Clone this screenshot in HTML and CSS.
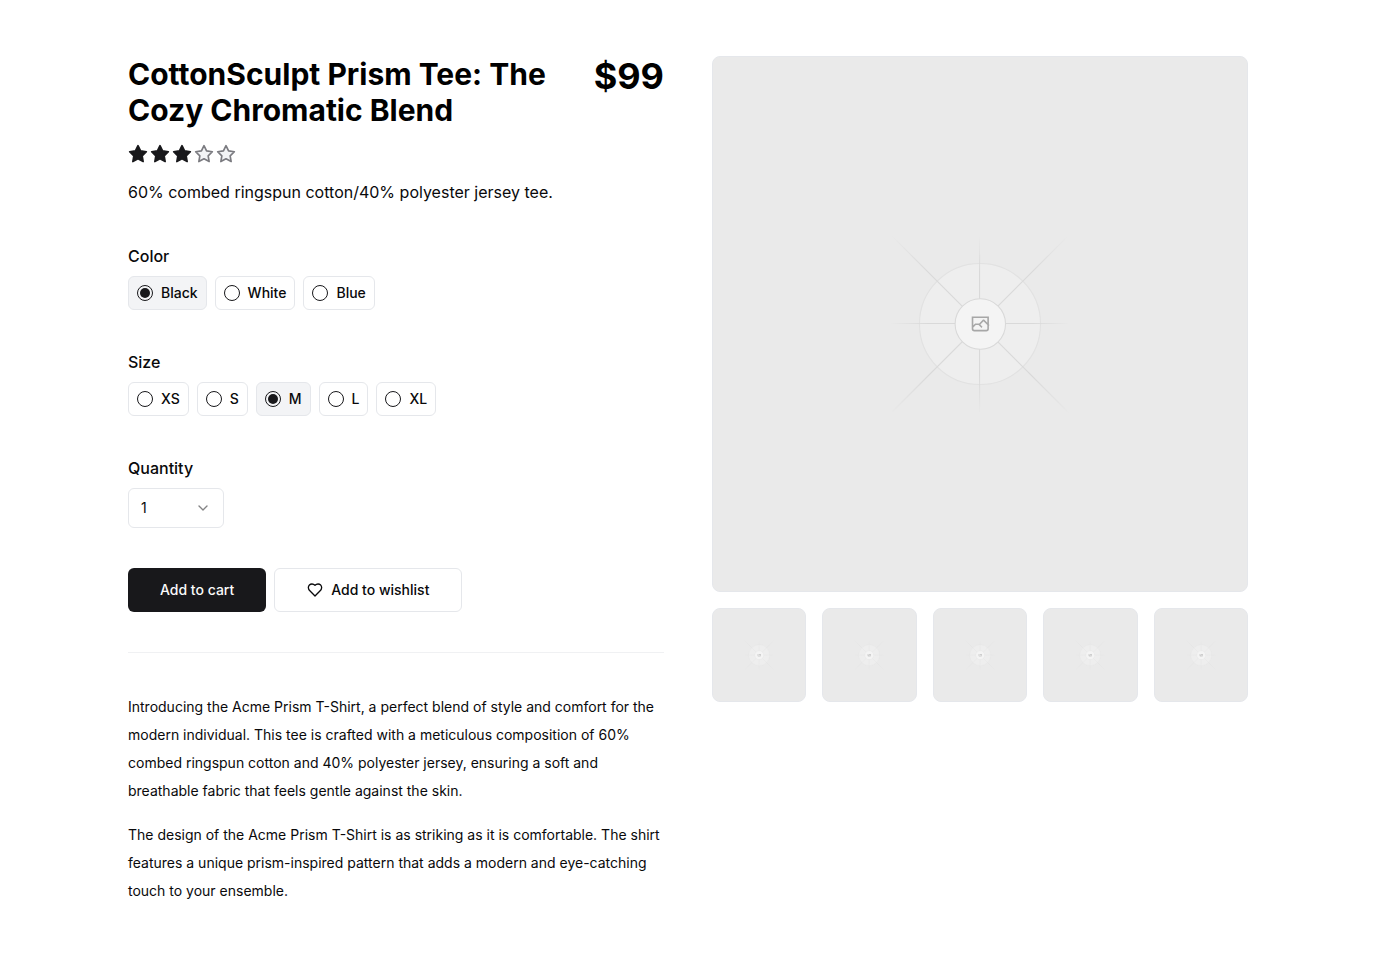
FILE: index.html
```html
<!DOCTYPE html>
<html lang="en">
<head>
<meta charset="utf-8">
<meta name="viewport" content="width=device-width, initial-scale=1">
<title>CottonSculpt Prism Tee</title>
<link rel="stylesheet" href="styles.css">
</head>
<body>
<svg class="defs" aria-hidden="true">
  <defs>
    <linearGradient id="fade-h" gradientUnits="userSpaceOnUse" x1="400" x2="800" y1="599" y2="599">
      <stop stop-color="#c9c9c9" stop-opacity="0"/><stop offset=".208" stop-color="#c9c9c9"/><stop offset=".792" stop-color="#c9c9c9"/><stop offset="1" stop-color="#c9c9c9" stop-opacity="0"/>
    </linearGradient>
    <linearGradient id="fade-v" gradientUnits="userSpaceOnUse" x1="599" x2="599" y1="400" y2="800">
      <stop stop-color="#c9c9c9" stop-opacity="0"/><stop offset=".208" stop-color="#c9c9c9"/><stop offset=".792" stop-color="#c9c9c9"/><stop offset="1" stop-color="#c9c9c9" stop-opacity="0"/>
    </linearGradient>
    <linearGradient id="fade-d" gradientUnits="userSpaceOnUse" x1="400" x2="800" y1="400" y2="800">
      <stop stop-color="#c9c9c9" stop-opacity="0"/><stop offset=".208" stop-color="#c9c9c9"/><stop offset=".792" stop-color="#c9c9c9"/><stop offset="1" stop-color="#c9c9c9" stop-opacity="0"/>
    </linearGradient>
    <linearGradient id="fade-u" gradientUnits="userSpaceOnUse" x1="400" x2="800" y1="800" y2="400">
      <stop stop-color="#c9c9c9" stop-opacity="0"/><stop offset=".208" stop-color="#c9c9c9"/><stop offset=".792" stop-color="#c9c9c9"/><stop offset="1" stop-color="#c9c9c9" stop-opacity="0"/>
    </linearGradient>
  </defs>
  <symbol id="placeholder" viewBox="0 0 1200 1200">
    <rect width="1200" height="1200" fill="#eaeaea"/>
    <g opacity=".5" stroke-width="2.4">
      <circle cx="600" cy="600" r="136" fill="#f2f2f2" stroke="#dadada"/>
      <path stroke="url(#fade-h)" d="M400 599H800"/>
      <path stroke="url(#fade-v)" d="M599 400V800"/>
      <path stroke="url(#fade-d)" d="M400 400 800 800"/>
      <path stroke="url(#fade-u)" d="M400 800 800 400"/>
      <circle cx="600.7" cy="600" r="56.6" fill="#fff" stroke="#c9c9c9"/>
      <path fill="#666" fill-rule="evenodd" d="M616.426 586.58h-31.434v16.176l3.553-3.554.531-.531h9.068l.074-.074 8.463-8.463h2.565l7.18 7.181V586.58Zm-15.715 14.654 3.698 3.699 1.283 1.282-2.565 2.565-1.282-1.283-5.2-5.199h-6.066l-5.514 5.514-.073.073v2.876a2.418 2.418 0 0 0 2.418 2.418h26.598a2.418 2.418 0 0 0 2.418-2.418v-8.317l-8.463-8.463-7.181 7.181-.071.072Zm-19.347 5.442v4.085a6.045 6.045 0 0 0 6.046 6.045h26.598a6.044 6.044 0 0 0 6.045-6.045v-7.108l1.356-1.355-1.282-1.283-.074-.073v-17.989h-38.689v23.43l-.146.146.146.147Z"/>
    </g>
  </symbol>
  <symbol id="star" viewBox="0 0 24 24">
    <path stroke-width="2" stroke-linecap="round" stroke-linejoin="round" d="m12 2 3.09 6.26L22 9.27l-5 4.87 1.18 6.88L12 17.77l-6.18 3.25L7 14.14 2 9.27l6.91-1.01L12 2Z"/>
  </symbol>
</svg>
<main class="product">
  <section class="details">
    <header class="summary">
      <div class="heading">
        <h1 class="title">CottonSculpt Prism Tee: The Cozy Chromatic Blend</h1>
        <div class="price">$99</div>
      </div>
      <div class="rating" role="img" aria-label="3 out of 5 stars">
        <svg class="star star-on"><use href="#star"/></svg>
        <svg class="star star-on"><use href="#star"/></svg>
        <svg class="star star-on"><use href="#star"/></svg>
        <svg class="star"><use href="#star"/></svg>
        <svg class="star"><use href="#star"/></svg>
      </div>
      <p class="tagline">60% combed ringspun cotton/40% polyester jersey tee.</p>
    </header>
    <form class="options">
      <div class="field" role="radiogroup" aria-labelledby="color-label">
        <span class="field-label" id="color-label">Color</span>
        <div class="choices">
          <label class="choice"><input class="radio" type="radio" name="color" value="black" checked>Black</label>
          <label class="choice"><input class="radio" type="radio" name="color" value="white">White</label>
          <label class="choice"><input class="radio" type="radio" name="color" value="blue">Blue</label>
        </div>
      </div>
      <div class="field" role="radiogroup" aria-labelledby="size-label">
        <span class="field-label" id="size-label">Size</span>
        <div class="choices">
          <label class="choice"><input class="radio" type="radio" name="size" value="xs">XS</label>
          <label class="choice"><input class="radio" type="radio" name="size" value="s">S</label>
          <label class="choice"><input class="radio" type="radio" name="size" value="m" checked>M</label>
          <label class="choice"><input class="radio" type="radio" name="size" value="l">L</label>
          <label class="choice"><input class="radio" type="radio" name="size" value="xl">XL</label>
        </div>
      </div>
      <div class="field">
        <label class="field-label" for="quantity">Quantity</label>
        <div class="select-box">
          <select class="select" id="quantity">
            <option>1</option><option>2</option><option>3</option><option>4</option><option>5</option>
          </select>
          <svg class="chevron" viewBox="0 0 24 24" aria-hidden="true"><path d="m6 9 6 6 6-6"/></svg>
        </div>
      </div>
      <div class="actions">
        <button class="button button-primary" type="button">Add to cart</button>
        <button class="button button-outline" type="button">
          <svg class="heart" viewBox="0 0 24 24" aria-hidden="true"><path d="M19 14c1.49-1.46 3-3.21 3-5.5A5.5 5.5 0 0 0 16.5 3c-1.76 0-3 .5-4.5 2-1.5-1.5-2.74-2-4.5-2A5.5 5.5 0 0 0 2 8.5c0 2.3 1.5 4.05 3 5.5l7 7Z"/></svg>
          Add to wishlist
        </button>
      </div>
    </form>
    <hr class="divider">
    <div class="description">
      <p>Introducing the Acme Prism T-Shirt, a perfect blend of style and comfort for the modern individual. This tee is crafted with a meticulous composition of 60% combed ringspun cotton and 40% polyester jersey, ensuring a soft and breathable fabric that feels gentle against the skin.</p>
      <p>The design of the Acme Prism T-Shirt is as striking as it is comfortable. The shirt features a unique prism-inspired pattern that adds a modern and eye-catching touch to your ensemble.</p>
    </div>
  </section>
  <section class="gallery" aria-label="Product images">
    <svg class="image" viewBox="0 0 1200 1200" role="img" aria-label="Product image"><use href="#placeholder"/></svg>
    <div class="thumbs">
      <button class="thumb" type="button" aria-label="View image 1"><svg class="image" viewBox="0 0 1200 1200"><use href="#placeholder"/></svg></button>
      <button class="thumb" type="button" aria-label="View image 2"><svg class="image" viewBox="0 0 1200 1200"><use href="#placeholder"/></svg></button>
      <button class="thumb" type="button" aria-label="View image 3"><svg class="image" viewBox="0 0 1200 1200"><use href="#placeholder"/></svg></button>
      <button class="thumb" type="button" aria-label="View image 4"><svg class="image" viewBox="0 0 1200 1200"><use href="#placeholder"/></svg></button>
      <button class="thumb" type="button" aria-label="View image 5"><svg class="image" viewBox="0 0 1200 1200"><use href="#placeholder"/></svg></button>
    </div>
  </section>
</main>
</body>
</html>
```

FILE: styles.css
```css
*, *::before, *::after { box-sizing: border-box; }

body {
  margin: 0;
  background: #fff;
  color: #09090b;
  font: 400 16px/24px Inter, "Liberation Sans", sans-serif;
}

h1, p { margin: 0; }
button, select { font: inherit; color: inherit; }
svg { display: block; }
.defs { position: absolute; width: 0; height: 0; }

.product {
  display: grid;
  grid-template-columns: minmax(0, 1fr) minmax(0, 1fr);
  gap: 48px;
  align-items: start;
  max-width: 1152px;
  margin: 0 auto;
  padding: 56px 16px;
}

.details, .options { display: grid; gap: 40px; }
.summary { display: grid; gap: 16px; }
.heading { display: flex; align-items: flex-start; gap: 16px; color: #000; }
.title { flex: 1; font-size: 30px; line-height: 36px; font-weight: 700; }
.price { font-size: 36px; line-height: 40px; font-weight: 700; }

.rating { display: flex; gap: 2px; }
.star { width: 20px; height: 20px; fill: #f3f4f6; stroke: #7b7b80; }
.star-on { fill: #18181b; stroke: #18181b; }

.field { display: grid; gap: 8px; justify-items: start; }
.field-label { font-weight: 500; }
.choices { display: flex; flex-wrap: wrap; gap: 8px; }
.choice {
  display: flex;
  align-items: center;
  gap: 8px;
  padding: 8px;
  border: 1px solid #e5e7eb;
  border-radius: 6px;
  font-size: 14px;
  line-height: 16px;
  font-weight: 500;
}
.choice:has(:checked) { background: #f3f4f6; }
.radio {
  appearance: none;
  display: grid;
  place-items: center;
  width: 16px;
  height: 16px;
  margin: 0;
  border: 1px solid #18181b;
  border-radius: 50%;
}
.radio:checked::before {
  content: "";
  width: 10px;
  height: 10px;
  border-radius: 50%;
  background: #18181b;
}

.select-box { display: grid; align-items: center; width: 96px; }
.select {
  grid-area: 1 / 1;
  appearance: none;
  width: 100%;
  height: 40px;
  padding: 0 12px;
  border: 1px solid #e5e7eb;
  border-radius: 6px;
  background: #fff;
  font-size: 14px;
}
.chevron {
  grid-area: 1 / 1;
  justify-self: end;
  width: 16px;
  height: 16px;
  margin-right: 13px;
  opacity: .5;
  pointer-events: none;
}
.chevron, .heart {
  fill: none;
  stroke: currentColor;
  stroke-width: 2;
  stroke-linecap: round;
  stroke-linejoin: round;
}

.actions { display: flex; flex-wrap: wrap; gap: 8px; }
.button {
  display: flex;
  align-items: center;
  gap: 8px;
  height: 44px;
  padding: 0 32px;
  border: 0;
  border-radius: 6px;
  font-size: 14px;
  line-height: 20px;
  font-weight: 500;
}
.button-primary { background: #18181b; color: #fafafa; }
.button-outline { border: 1px solid #e5e7eb; background: #fff; }
.heart { width: 16px; height: 16px; }

.divider { width: 100%; height: 1px; margin: 0; border: 0; background: #f0f1f3; }
.description { display: grid; gap: 16px; font-size: 14px; line-height: 28px; }

.gallery { display: grid; gap: 16px; }
.image {
  width: 100%;
  aspect-ratio: 1;
  border: 1px solid #e5e7eb;
  border-radius: 8px;
  background: #eaeaea;
}
.thumbs { display: grid; grid-template-columns: repeat(5, minmax(0, 1fr)); gap: 16px; }
.thumb { padding: 0; border: 0; background: none; }
```
